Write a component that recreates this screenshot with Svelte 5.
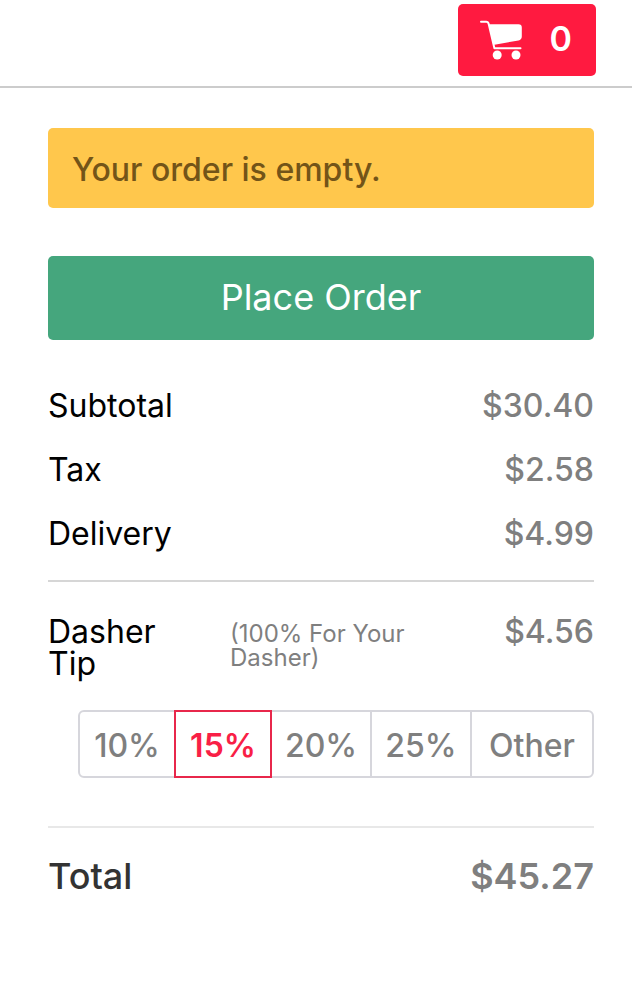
<script lang="ts">
  let cartCount = $state(0);
  let selectedTip = $state('15%');

  const charges = [
    { label: 'Subtotal', amount: '$30.40' },
    { label: 'Tax', amount: '$2.58' },
    { label: 'Delivery', amount: '$4.99' }
  ];

  const tips = ['10%', '15%', '20%', '25%', 'Other'];
</script>

<header class="topbar">
  <button class="cart-button" aria-label="Cart, {cartCount} items">
    <svg class="cart-icon" viewBox="0 0 42 40" aria-hidden="true">
      <path d="M1 1.800h5.200q2 0 2.500 2.200L14.400 28.300H40.500" fill="none" stroke="#fff" stroke-width="2" stroke-linecap="round" stroke-linejoin="round" />
      <path d="M9 4.300H38.500q3.300 0 3.300 3.300V16.500q0 3.300-3.300 3.900L14.500 24.800 13 24Z" fill="#fff" />
      <circle cx="17.200" cy="35" r="4.500" fill="#fff" />
      <circle cx="36" cy="35" r="4.500" fill="#fff" />
    </svg>
    <span class="cart-count">{cartCount}</span>
  </button>
</header>

<main class="checkout">
  <p class="notice">Your order is empty.</p>

  <button class="place-order">Place Order</button>

  <dl class="charges">
    {#each charges as charge}
      <div class="row">
        <dt>{charge.label}</dt>
        <dd>{charge.amount}</dd>
      </div>
    {/each}
  </dl>

  <section class="tip">
    <div class="tip-summary">
      <span class="tip-label" id="tip-label">Dasher Tip</span>
      <span class="tip-note">(100% For Your Dasher)</span>
      <span class="tip-amount">$4.56</span>
    </div>

    <div class="tip-options" role="radiogroup" aria-labelledby="tip-label">
      {#each tips as tip}
        <label class="tip-option" class:selected={selectedTip === tip}>
          <input type="radio" name="tip" value={tip} bind:group={selectedTip} />
          <span>{tip}</span>
        </label>
      {/each}
    </div>
  </section>

  <div class="total">
    <span class="total-label">Total</span>
    <span class="total-amount">$45.27</span>
  </div>
</main>

<style>
  :global(body) {
    margin: 0;
    background: #fff;
    font-family: Inter, "Liberation Sans", sans-serif;
    font-size: 32px;
    line-height: 32px;
    color: #000;
  }

  button {
    border: none;
    font-family: inherit;
    cursor: pointer;
  }

  .topbar {
    display: flex;
    justify-content: flex-end;
    padding: 4px 36px 10px;
    border-bottom: 2px solid #ccc;
  }

  .cart-button {
    display: flex;
    align-items: center;
    gap: 28px;
    height: 72px;
    padding: 0 24px 0 22px;
    border-radius: 5px;
    background: #ff1a40;
    color: #fff;
  }

  .cart-icon {
    width: 42px;
    height: 40px;
  }

  .cart-count {
    padding-bottom: 2px;
    font-size: 34px;
    font-weight: 600;
    line-height: 40px;
  }

  .checkout {
    padding: 40px 38px 40px 48px;
  }

  .notice {
    margin: 0 0 48px;
    padding: 26px 24px 22px;
    border-radius: 5px;
    background: #ffc74c;
    color: #735418;
    font-weight: 500;
  }

  .place-order {
    display: block;
    width: 100%;
    padding: 21px 22px 23px;
    border-radius: 5px;
    background: #45a67d;
    color: #fff;
    font-size: 36px;
    line-height: 40px;
  }

  .charges {
    margin: 0;
    padding: 50px 0 30px;
    border-bottom: 2px solid #d6d6d6;
  }

  .row {
    display: flex;
    justify-content: space-between;
  }

  .row + .row {
    margin-top: 32px;
  }

  dd {
    margin: 0;
    color: #7f7f7f;
    font-weight: 500;
  }

  .tip {
    padding: 34px 0 48px;
    border-bottom: 2px solid #e8e8e8;
  }

  .tip-summary {
    display: grid;
    grid-template-columns: 1fr 1fr 1fr;
    margin-bottom: 30px;
  }

  .tip-label {
    padding-right: 24px;
  }

  .tip-note {
    padding-top: 6px;
    /* the note hangs past its column's right edge towards the amount */
    margin-right: -24px;
    color: #7f7f7f;
    font-size: 24px;
    line-height: 24px;
  }

  .tip-amount {
    color: #7f7f7f;
    font-weight: 500;
    text-align: right;
  }

  .tip-options {
    display: grid;
    grid-template-columns: 98fr 96fr 100fr 100fr 122fr;
    margin-left: 30px;
  }

  .tip-option {
    position: relative;
    padding: 18px 0 14px;
    border: 2px solid #d6d6dc;
    color: #7f7f7f;
    font-weight: 500;
    text-align: center;
    cursor: pointer;
  }

  .tip-option + .tip-option {
    margin-left: -2px;
  }

  .tip-option:first-child {
    border-radius: 6px 0 0 6px;
  }

  .tip-option:last-child {
    border-radius: 0 6px 6px 0;
  }

  .tip-option.selected {
    z-index: 1;
    border-color: #e8274b;
    color: #f91f46;
    font-weight: 600;
  }

  .tip-option input {
    position: absolute;
    inset: 0;
    margin: 0;
    opacity: 0;
    cursor: pointer;
  }

  .total {
    display: flex;
    justify-content: space-between;
    padding-top: 28px;
    font-size: 36px;
    line-height: 40px;
  }

  .total-label {
    color: #333;
    font-weight: 500;
  }

  .total-amount {
    color: #7f7f7f;
    font-weight: 600;
  }
</style>
